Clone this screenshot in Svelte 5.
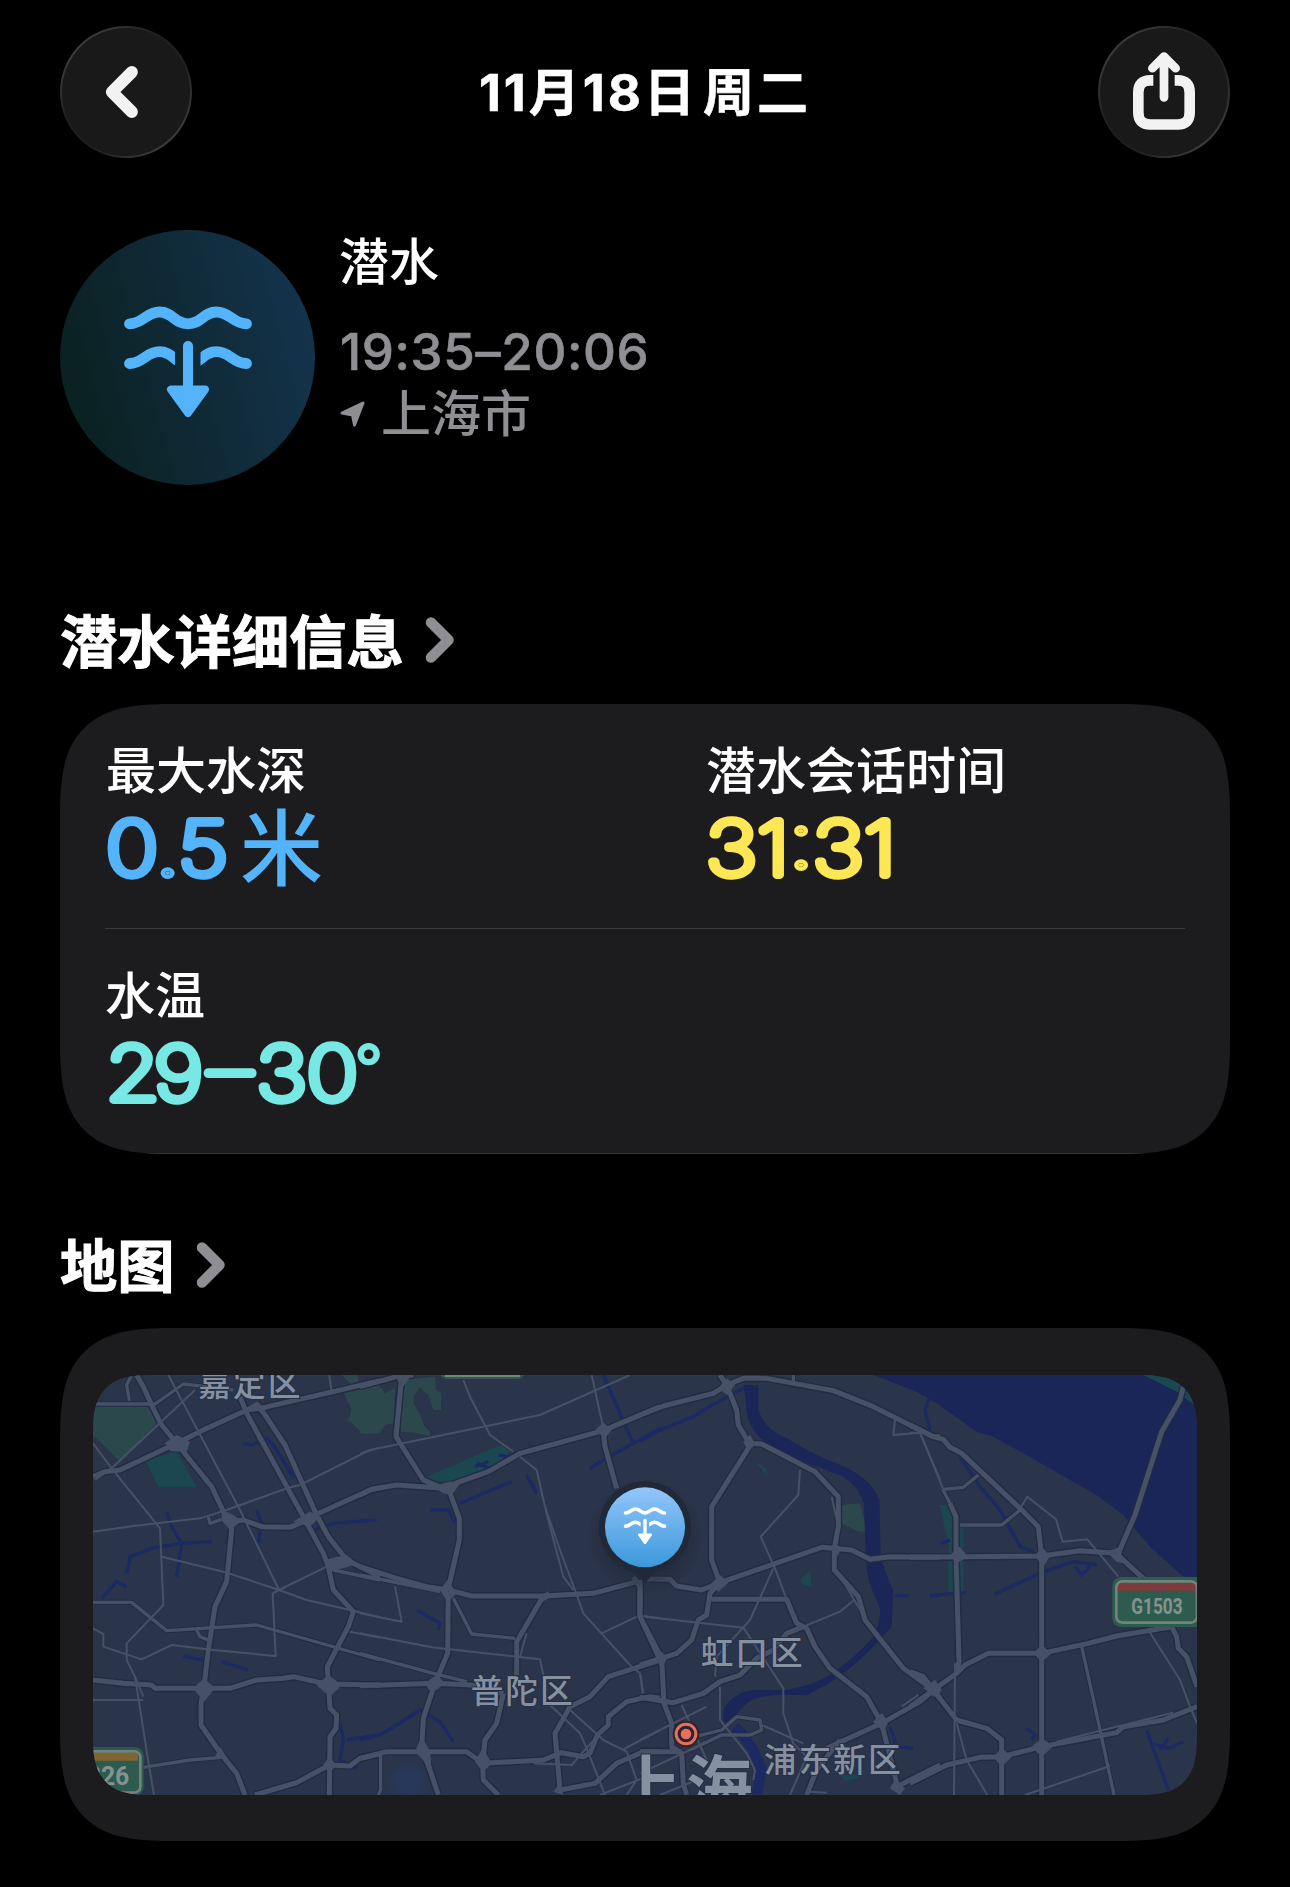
<script lang="ts">
  const metrics = [
    [
      { label: '最大水深', value: '0.5', width: 124, unit: '米', tone: 'depth' },
      { label: '潜水会话时间', value: '31:31', width: 192, unit: '', tone: 'time' }
    ],
    [{ label: '水温', value: '29–30', width: 254, kern: '0 -5 5 4 0', unit: '°', tone: 'temp' }]
  ];

  // the map is drawn in four sections, each one offset by x
  const sections = [
    {
      x: 0,
      park: 'M39 140H215L230 190L120 305L39 225ZM790 95L900 75V220L850 222L805 180L815 150ZM785 45H835V70L815 75Z',
      wood: 'M195 300L290 275L350 382H235Z',
      water: '',
      creek:
        'M490 250L515 255L560 235L580 255L615 310L640 355M260 455L275 500L305 550L290 650M140 640L150 590L215 565L300 550L395 545M65 715L110 665L140 680M530 450L545 490L535 550M310 888L370 900M425 905L505 930M700 510L760 490L890 480M780 1090L790 1140L780 1200L830 1225M800 1140L900 1125',
      major:
        'M170 45L190 80L215 135L245 195L290 250L330 300L395 380L435 465L455 485V510L440 665L405 740L385 870L372 980L363 1030V1095L425 1185L470 1240L495 1305M39 350L75 335L120 330L290 250L370 210L500 150L540 145L760 95L900 62M455 485L490 480L545 500L630 502L670 485L705 465L870 390L900 383M530 130L555 165L615 255L710 465L745 530L800 600L850 625L900 650M480 110L500 160L670 470L730 580L745 620L760 690L820 755L805 800L742 920L745 970L750 1045L770 1065L768 1105L750 1130L748 1305M745 615L815 600M39 960L130 970L215 975L225 985H450L530 960L610 955L640 950L740 972L900 975M525 1305L650 1268L748 1215L810 1218L840 1195L900 1182',
      mid: 'M155 45L140 75L148 122M39 132H225L310 72L380 80L460 90M39 727H155L260 812L530 795L900 900M190 1222L330 1200L425 1192M760 630L900 660M350 810L360 830L385 840M385 470L390 490L425 478',
      minor:
        'M95 325L345 90M39 250L95 325L240 505L250 735L140 850V900L165 950L190 1010M39 515L160 498L360 475L440 450L620 385L660 375L860 275L900 262M265 45L480 450L597 690L578 700L587 888L400 870L275 855L185 898L70 860V822L39 805M597 690L740 620M245 590L430 635L597 690L680 720L800 748L900 772M39 1020H190M165 950L205 1205L222 1305M810 815L900 833M748 45L754 90M45 360L95 325',
      hub: 'M255 250L290 225L330 245L320 275L270 272ZM340 985L372 955L405 985L372 1025ZM710 975L745 945L785 975L750 1010ZM425 450L460 465L485 482L450 510L425 480ZM640 485L690 455L720 470L690 500ZM730 1215L748 1190L768 1215L748 1240ZM490 150L530 125L560 150ZM405 1190L420 1160L445 1200ZM735 600L800 585L830 612L750 635Z'
    },
    {
      x: 840,
      park: 'M0 85L40 95L68 82L72 100L105 85L100 190L75 195L60 220H0ZM125 60L225 50L228 90L243 100V150H220L205 105L180 82L162 105L160 130L178 160L195 200L210 215V228L165 218L122 215Z',
      wood: 'M200 350L420 255L450 275L385 335L300 360L230 365Z',
      water: '',
      creek:
        'M300 430L455 365M210 450H265L285 490M345 320L385 305M350 310L390 325M415 285L445 290M500 345L530 400M170 750L240 790L235 810M0 1140L60 1125L110 1095L180 1050L240 1085L280 1145M690 325L730 300L820 250L900 205M730 45L780 160L820 250',
      major:
        'M0 80L110 50L160 45M125 50L108 230L190 360L250 385M0 405L35 388L110 375L250 385L300 365L385 335L480 280L730 212L900 140M265 385L298 475V540L265 685L263 880L225 970L190 1075L185 1165L210 1230L235 1305M0 620L110 655L200 680L265 690L335 708H550L700 700L830 665M0 977L225 970L330 975L430 1000M550 708L470 845V945M430 1000L410 1090L375 1140L368 1210L370 1260L415 1305M0 1195L80 1175H320L368 1210L550 1200L605 1178L670 1190L690 1180L712 1125L745 1095V1070L800 1025L870 1010L900 1015M600 1290L585 1120L630 1040L690 1010L745 950L900 900M600 1290L705 1270L770 1210L850 1175H900M730 212L735 260L770 385M820 650L840 680V770L900 900',
      mid: 'M0 645L240 695M0 880L220 940L320 965M62 1180V1290L55 1305M280 715L335 822L465 835',
      minor:
        'M0 282L30 270L540 165L810 45M310 60L330 110L390 225L460 275M480 290L530 330L555 440L600 570L645 690L670 760L810 915L840 940L850 1000M545 400L570 500L610 650L640 690M695 45L730 205M725 820L830 770M850 768L900 775M105 680L125 785L0 760M0 820L215 862L540 898L550 945M500 820L480 890M570 1035L660 1120L680 1165L735 1305M630 1050L730 1140L800 1175L830 1260L800 1305M520 1210L635 1215L710 1130M790 1168L900 1110M720 1305L860 1250',
      hub: 'M220 380L270 365L300 370L275 405L250 400ZM240 690L263 660L290 700L263 725ZM705 210L730 188L755 210L735 235ZM195 970L230 945L255 970L215 1000ZM165 1175L185 1130L210 1175L215 1235L185 1195ZM345 1205L368 1165L395 1210L370 1235ZM535 708L565 695L570 712L540 730ZM105 45H155L125 85ZM885 895L900 875V915ZM580 1295L600 1270L610 1305Z'
    },
    {
      x: 1680,
      park: 'M605 435L660 430L672 470L675 515H655L605 490Z',
      wood: 'M480 660L510 630L515 680L485 672ZM345 305L380 325V345ZM600 1245H655V1255L615 1262Z',
      water: 'M310 75H355V150Q375 210 440 235Q530 290 600 315Q690 350 718 420L722 590Q735 640 760 690L755 800L690 870Q600 960 500 1005H410Q340 1010 315 1035Q290 1060 270 1085H250V1050Q275 1000 340 990H440Q520 975 570 945Q660 880 700 830Q735 760 710 720Q680 660 678 600L672 430Q650 370 600 345Q470 300 400 260Q320 220 318 130Z',
      creek: 'M310 85L200 145L160 170L60 210L0 245M765 707H805M870 707H900M870 110L855 150L870 210M750 1100L770 1160L820 1165',
      major:
        'M0 165L70 138L220 100L260 75L310 55H380L580 92L700 140L880 230H900M240 45L260 75L290 150L295 195L325 245V265L215 440V600L240 670M325 250L365 252L525 335L595 410V500L583 565V630L655 710L675 780L790 925L880 990L900 1015M20 657L90 658L110 678L185 690L240 668L545 562L635 570L690 598L750 590L900 592M240 668L210 700L200 765L175 780L155 840L110 880L65 895L0 915M0 660V770L65 895L72 1030L95 1090V1160L125 1180L130 1270L140 1305M215 718H440L470 790L500 805L525 860L570 925L680 1010L725 1090L770 1270M0 1012L100 1028L190 1000L240 965L300 945L350 895L400 870L440 820L490 800M560 1165L725 1090L840 1025L880 990M500 1305L530 1230L600 1140M0 1175H125M770 1280L900 1215',
      mid: 'M165 1130L245 1110L290 1070L360 1080L365 1110L330 1125L245 1125L150 1170M460 45V70M240 45L275 105',
      minor:
        'M480 330L475 405L362 530L405 625L440 718M400 625L330 780L230 890L225 950M15 770L310 803L430 985V1060L460 1150L500 1190L450 1305M365 1095L490 1150M490 800L600 755L645 718M575 410L595 500M765 180L760 225L840 218L900 360M240 980V1080L320 1180L345 1230L340 1260M0 1140L200 1040M125 1035L200 1200M590 630L690 800M785 1040L835 1005M0 1240L245 1125M510 1295L560 1298M60 1305L170 1260M0 940L8 1000',
      hub: 'M235 85L260 55L285 75L262 105ZM215 670L240 645L265 668L235 695ZM700 1085L725 1060L745 1085L730 1115ZM850 985L880 965L900 985V1010ZM48 895L65 875L82 895L65 920ZM572 565L583 550L605 565L590 590ZM750 1285L765 1260L795 1285L780 1305ZM310 245L330 225L345 252L325 275Z'
    },
    {
      x: 2490,
      park: '',
      wood: 'M88 435H112L125 470V580H150V500H160V695H115V605H105L118 560Z',
      water: 'M-110 45L20 95L80 130L200 215L250 230L350 285L480 360L560 405L640 465L720 560L820 650H861V45Z',
      creek:
        'M150 290L210 380L270 450L330 560L370 575M255 702L400 635L490 605L560 615M495 620L515 645L540 620M60 707L170 698M350 1105L375 1125L365 1140M710 1110L735 1180L775 1290M725 1150L775 1165L820 1145M750 1170L775 1135M92 550L120 540',
      major:
        'M0 195L70 230L100 238L120 262L155 280L330 445L385 500L395 590M0 592L395 588L510 572L620 580L645 605L700 655M820 80L810 120L755 215L675 465L625 580M120 430L138 470V590L147 905L140 940L70 990L0 1040M0 935L40 950L70 990L140 1080L230 1105L275 1140V1305M140 940L165 915L235 880H395L535 850L620 828L785 800L800 830L805 865L830 890L861 980M395 590V1305M0 1270L110 1215L210 1192L275 1190L395 1160L620 1118L640 1100L760 1080L861 1040',
      mid: 'M98 388L160 382L205 345M98 388L120 430M150 495H275L330 450M515 860L555 1040L612 1305',
      minor:
        'M0 218H30L100 388M330 445L352 410L438 478L458 545L532 538L625 650M715 810L810 960L840 1040L861 1090M135 910L132 1305M140 1090L170 1200L232 1305M345 1305L600 1218M440 1145L640 1095L790 1058',
      hub: 'M115 590L148 560L175 592L145 605ZM375 588L395 560L420 588L400 620ZM370 880L395 855L425 880L395 905ZM365 1160L395 1135L430 1158L395 1190ZM250 1190L275 1165L305 1190L275 1220ZM590 575L630 562L635 590L665 615L620 605ZM45 985L75 960L95 990L70 1010Z'
    }
  ];

  const districts = [
    { name: '嘉定区', x: 355, y: 107 },
    { name: '普陀区', x: 1172, y: 1028 },
    { name: '虹口区', x: 1862, y: 915 },
    { name: '浦东新区', x: 2052, y: 1236 }
  ];
</script>

{#snippet diveGlyph(id: string)}
  <clipPath {id}>
    <path d="M-2 38H51V80H-2ZM76.5 38H130V80H76.5Z" />
  </clipPath>
  <g fill="none" stroke="currentColor" stroke-width="10.8" stroke-linecap="round">
    <path d="M5.5 17.8C19 17.8 22 6 35.5 6S50 17.8 64 17.8S79 6 92.5 6S109 17.8 122.5 17.8" />
    <path
      clip-path="url(#{id})"
      d="M5.5 57.5C19 57.5 22 45.7 35.5 45.7S50 57.5 64 57.5S79 45.7 92.5 45.7S109 57.5 122.5 57.5"
    />
    <path d="M64 40V84" stroke-width="10" />
    <path d="M47 83.500H81L64 107Z" fill="currentColor" stroke-width="8" stroke-linejoin="round" />
  </g>
{/snippet}

{#snippet sectionTitle(title: string)}
  <h2 class="section-title">
    <span>{title}</span>
    <svg class="chevron" width="30" height="48" viewBox="0 0 30 48">
      <path d="M6 6.500L23.500 24L6 41.500" />
    </svg>
  </h2>
{/snippet}

<main class="screen">
  <header class="topbar">
    <button class="round" aria-label="返回">
      <svg width="132" height="132" viewBox="0 0 132 132">
        <path class="icon" stroke-width="12.500" d="M72 45.500L51.500 66L72 86.500" />
      </svg>
    </button>
    <h1>11月18日 周二</h1>
    <button class="round" aria-label="分享">
      <svg width="132" height="132" viewBox="0 0 132 132">
        <path
          class="icon box"
          stroke-width="11"
          d="M55 54H52Q39.500 54 39.500 66.500V87Q39.500 99.500 52 99.500H80Q92.500 99.500 92.500 87V66.500Q92.500 54 80 54H77"
        />
        <path class="icon" stroke-width="9" d="M66 31V71.500M54 41.500L66 29.500L78 41.500" />
      </svg>
    </button>
  </header>

  <section class="hero">
    <div class="badge">
      <svg width="128" height="112" viewBox="0 0 128 112">{@render diveGlyph('glyph-badge')}</svg>
    </div>
    <div class="summary">
      <p class="name">潜水</p>
      <p class="hours">19:35–20:06</p>
      <p class="place">
        <svg width="26" height="26" viewBox="0 0 26 26">
          <path d="M3 12L24 2L15.500 24L13.500 14Z" />
        </svg>
        上海市
      </p>
    </div>
  </section>

  {@render sectionTitle('潜水详细信息')}
  <section class="card metrics">
    {#each metrics as row}
      <div class="row">
        {#each row as m}
          <div class="metric {m.tone}">
            <p class="label">{m.label}</p>
            <div class="value">
              <svg width={m.width} height="92">
                <text x="1" y="74" dx={m.kern} textLength={m.width - 2} lengthAdjust="spacingAndGlyphs">{m.value}</text>
              </svg>
              {#if m.unit}<span class="unit">{m.unit}</span>{/if}
            </div>
          </div>
        {/each}
      </div>
    {/each}
  </section>

  {@render sectionTitle('地图')}
  <section class="card map-card">
    <svg class="map" viewBox="39 45 3312 1260">
      <defs>
        <linearGradient id="pin-fill" x1="0" y1="0" x2="0" y2="1">
          <stop offset="0" stop-color="#93c6fb" />
          <stop offset="1" stop-color="#3b98da" />
        </linearGradient>
        <radialGradient id="pin-shade">
          <stop offset="0.600" stop-color="#1f2636" stop-opacity="0.600" />
          <stop offset="1" stop-color="#1f2636" stop-opacity="0" />
        </radialGradient>
        <radialGradient id="lake">
          <stop offset="0.400" stop-color="#27385a" />
          <stop offset="1" stop-color="#27385a" stop-opacity="0" />
        </radialGradient>
      </defs>

      {#each sections as s}
        <g transform="translate({s.x} 0)">
          <path class="park" d={s.park} />
          <path class="wood" d={s.wood} />
          <path class="water" d={s.water} />
          <path class="creek" d={s.creek} />
        </g>
      {/each}
      <path class="creek wide" d="M1965 1100L1985 1120L2020 1170L2045 1230L2030 1305" />
      <ellipse cx="985" cy="1265" rx="75" ry="70" fill="url(#lake)" />
      <path class="wood" d="M3190 45L3290 95L3351 140V45Z" />

      <g class="casing">
        {#each sections as s}
          <path transform="translate({s.x} 0)" stroke-width="23" d={s.major} />
          <path transform="translate({s.x} 0)" stroke-width="15" d={s.mid} />
        {/each}
      </g>
      <g class="roads">
        {#each sections as s}
          <g transform="translate({s.x} 0)">
            <path stroke-width="6" d={s.minor} />
            <path stroke-width="10" d={s.mid} />
            <path stroke-width="15" d={s.major} />
            <path class="hub" d={s.hub} />
          </g>
        {/each}
      </g>

      <g class="sign">
        <rect class="plate" x="1078" y="-80" width="258" height="137" rx="24" />
        <path class="edge" d="M1095 47H1320" />
        <rect class="plate" x="-80" y="1161" width="271" height="146" rx="26" />
        <path d="M-60 1178H165Q174 1178 174 1190V1202H-60Z" fill="#81652f" />
        <rect class="edge" x="-70" y="1174" width="251" height="124" rx="18" />
        <text x="20" y="1274" font-size="80" textLength="128" lengthAdjust="spacingAndGlyphs">226</text>
        <rect class="plate" x="3097" y="651" width="275" height="150" rx="26" />
        <path d="M3113 692V680Q3113 669 3125 669H3340Q3350 669 3350 680V692Z" fill="#7e3a3d" />
        <rect class="edge" x="3109" y="664" width="242" height="124" rx="18" />
        <text x="3154" y="761" font-size="68" textLength="154" lengthAdjust="spacingAndGlyphs">G1503</text>
      </g>

      <g class="districts">
        {#each districts as d}
          <text x={d.x} y={d.y}>{d.name}</text>
        {/each}
        <text class="city" x="1604" y="1352">上海</text>
      </g>

      <g class="centre">
        <circle cx="1818" cy="1122" r="40" fill="#30242b" />
        <circle cx="1818" cy="1122" r="29.500" fill="none" stroke="#e5705f" stroke-width="9" />
        <circle cx="1818" cy="1122" r="16" fill="#e5705f" />
      </g>

      <circle cx="1695" cy="530" r="175" fill="url(#pin-shade)" />
      <path d="M1650 620L1695 668L1740 620Z" fill="#212838" />
      <circle cx="1695" cy="502" r="138" fill="#212838" />
      <circle cx="1695" cy="502" r="120" fill="url(#pin-fill)" />
      <g class="pin-glyph" transform="translate(1631 441)">{@render diveGlyph('glyph-pin')}</g>
    </svg>
  </section>
</main>

<style>
  :global(body) {
    background: #000;
  }

  .screen {
    box-sizing: border-box;
    width: 1290px;
    height: 1887px;
    padding: 26px 60px 0;
    overflow: hidden;
    background: #000;
    color: #fff;
    font-family: Inter, "Noto Sans CJK SC", sans-serif;
  }

  h1,
  h2,
  p {
    margin: 0;
  }

  .topbar {
    display: flex;
    align-items: center;
    justify-content: space-between;
    height: 132px;
  }

  h1 {
    padding-top: 2px;
    font-size: 51px;
    font-weight: 700;
    letter-spacing: 3px;
    word-spacing: -10px;
    line-height: 60px;
    -webkit-text-stroke: 0.6px currentColor;
  }

  .round {
    width: 132px;
    height: 132px;
    padding: 2px;
    border: 0;
    border-radius: 50%;
    background: linear-gradient(135deg, #444 8%, #202020 38%, #202020 62%, #444 92%);

    & svg {
      display: block;
      width: 128px;
      height: 128px;
      border-radius: 50%;
      background: #191919;
    }
  }

  .icon {
    fill: none;
    stroke: #f2f2f2;
    stroke-linecap: round;
    stroke-linejoin: round;
  }

  .icon.box {
    stroke-linecap: butt;
  }

  .hero {
    display: flex;
    gap: 24px;
    margin-top: 72px;
    height: 255px;
  }

  .badge {
    box-sizing: border-box;
    width: 255px;
    height: 255px;
    padding: 76px 0 0 64px;
    border-radius: 50%;
    background: linear-gradient(75deg, #0a201f 5%, #14334c 92%);
    color: #53b4fb;
  }

  .summary {
    padding-top: 1px;
    font-size: 50px;
    font-weight: 500;
    line-height: 62px;
  }

  .hours {
    margin-top: 28px;
    padding-left: 1px;
    color: #8e8e93;
    font-size: 51px;
    letter-spacing: 0.6px;
    -webkit-text-stroke: 0.6px currentColor;
  }

  .place {
    display: flex;
    align-items: center;
    gap: 16px;
    color: #8e8e93;

    & path {
      fill: #8e8e93;
      stroke: #8e8e93;
      stroke-width: 3;
      stroke-linejoin: round;
    }
  }

  .section-title {
    display: flex;
    align-items: center;
    gap: 21px;
    height: 60px;
    margin: 125px 0 34px;
    font-size: 57.3px;
    font-weight: 700;
    line-height: 60px;

    & span {
      padding-top: 3px;
      -webkit-text-stroke: 1px currentColor;
    }
  }

  .metrics + .section-title {
    margin: 81px 0 33px;

    & span {
      padding-top: 1px;
    }
  }

  .chevron path {
    fill: none;
    stroke: #8e8e93;
    stroke-width: 10.5;
    stroke-linecap: round;
    stroke-linejoin: round;
  }

  .card {
    overflow: hidden;
    border-radius: 90px;
    background: #1c1c1e;
  }

  .row {
    display: grid;
    grid-template-columns: 600px 1fr;
    box-sizing: border-box;
    height: 225px;
    margin: 0 45px;
    padding: 37px 0 0;
    border-bottom: 1px solid #3a3a3c;
  }

  .row:last-child {
    margin: 0;
    padding: 37px 45px 0;
  }

  .label {
    padding-left: 1px;
    font-size: 50px;
    font-weight: 500;
    line-height: 60px;
  }

  .temp .label {
    padding-left: 0;
  }

  .value {
    display: flex;
    height: 92px;

    & svg {
      overflow: visible;
    }

    /* thin digits under a heavy round stroke give the rounded numerals */
    & text {
      font-size: 74px;
      font-weight: 100;
      fill: currentColor;
      stroke: currentColor;
      stroke-width: 8;
      stroke-linejoin: round;
      stroke-linecap: round;
    }
  }

  .unit {
    margin-left: 11px;
    font-size: 83px;
    font-weight: 500;
    line-height: 96px;
  }

  .depth .value {
    color: #53b4fb;
  }

  .time .value {
    color: #fde754;
  }

  .temp .value {
    color: #77e8e4;
  }

  .temp .unit {
    margin-left: -5px;
    font-size: 64px;
    font-weight: 700;
    line-height: 82px;
  }

  .map-card {
    box-sizing: border-box;
    height: 513px;
    padding: 47px 33px 46px;
  }

  .map {
    display: block;
    width: 1104px;
    height: 420px;
    border-radius: 50px;
    background: #2a344a;
  }

  @supports (corner-shape: squircle) {
    .card {
      border-radius: 118px;
      corner-shape: superellipse(1.6);
    }

    .map {
      border-radius: 60px;
      corner-shape: superellipse(1.5);
    }
  }

  .park {
    fill: #2b494d;
  }

  .wood {
    fill: #1b4850;
  }

  .water {
    fill: #1a2558;
  }

  .creek {
    fill: none;
    stroke: #1b2a62;
    stroke-width: 10;
  }

  .creek.wide {
    stroke-width: 30;
  }

  .casing path {
    fill: none;
    stroke: #222b40;
    stroke-linejoin: round;
  }

  .roads path {
    fill: none;
    stroke: #465168;
    stroke-linejoin: round;
  }

  .roads .hub {
    fill: #465168;
  }

  .sign {
    & .plate {
      fill: #2d5c4f;
    }

    & .edge {
      fill: none;
      stroke: #75817b;
      stroke-width: 8;
    }

    & text {
      fill: #84938f;
      font-family: Roboto, sans-serif;
      font-weight: 700;
    }
  }

  .districts text {
    fill: #8590a1;
    stroke: #263046;
    stroke-width: 6;
    paint-order: stroke;
    font-size: 98px;
    font-weight: 500;
    letter-spacing: 6px;
  }

  .districts .city {
    font-size: 200px;
    font-weight: 700;
    letter-spacing: 14px;
  }

  .pin-glyph {
    color: #fff;
  }
</style>
